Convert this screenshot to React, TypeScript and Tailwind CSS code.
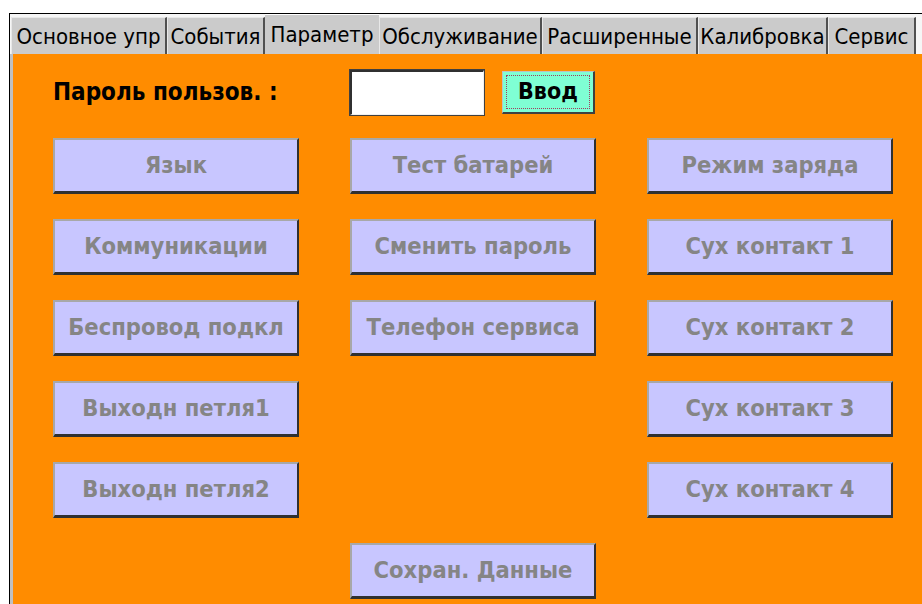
import React from 'react';

// Tab captions with their widths in the strip
const tabs: [string, number][] = [
  ['Основное упр', 156],
  ['События', 98],
  ['Параметр', 114],
  ['Обслуживание', 163],
  ['Расширенные', 156],
  ['Калибровка', 130],
  ['Сервис', 88],
];

// Three columns of settings buttons; null leaves the cell empty
const rows: (string | null)[][] = [
  ['Язык', 'Тест батарей', 'Режим заряда'],
  ['Коммуникации', 'Сменить пароль', 'Сух контакт 1'],
  ['Беспровод подкл', 'Телефон сервиса', 'Сух контакт 2'],
  ['Выходн петля1', null, 'Сух контакт 3'],
  ['Выходн петля2', null, 'Сух контакт 4'],
  [null, 'Сохран. Данные', null],
];

const font = { fontFamily: '"DejaVu Sans Condensed", "DejaVu Sans", sans-serif' };

function PanelButton({ label }: { label: string }) {
  return (
    <div className="h-[56px] w-[246px] bg-[#c8c6ff] border-t-2 border-l-2 border-t-[#a8a8a8] border-l-[#a8a8a8] border-b-[3px] border-r-2 border-b-[#303030] border-r-[#303030] flex items-center justify-center whitespace-nowrap text-[23.5px] font-bold text-[#858585]">
      {label}
    </div>
  );
}

export default function App() {
  return (
    <div className="w-[922px] h-[604px] bg-white pt-[13px] pl-[9px] overflow-hidden" style={font}>
      <div className="h-full border-t border-l border-black flex flex-col">
        {/* tab strip */}
        <div className="h-[40px] flex items-end bg-[#f6f6f6] pl-px">
          {tabs.map(([t, w]) => {
            const active = t === 'Параметр';
            return (
              <div
                key={t}
                style={{ width: w }}
                className={
                  active
                    ? 'h-[40px] shrink-0 whitespace-nowrap bg-[#cbcbcb] border-t border-t-white flex items-center justify-center text-[22px] text-black'
                    : 'h-[37px] shrink-0 whitespace-nowrap bg-[#cbcbcb] border-t border-l border-t-[#e8e8e8] border-l-[#e8e8e8] border-r-2 border-r-[#505050] flex items-center justify-center text-[22px] text-black'
                }
              >
                {t}
              </div>
            );
          })}
        </div>

        {/* orange settings page */}
        <div className="flex-1 bg-[#ff8c00] border-l-[3px] border-l-[#c0c0c0] pl-[40px] pt-[15px]">
          <div className="flex items-center h-[46px]">
            <div className="w-[297px] text-[24px] font-bold text-black">Пароль пользов. :</div>
            <div className="w-[134px] h-[45px] bg-white border-t-2 border-l-2 border-t-[#303030] border-l-[#303030] border-b border-r border-b-[#f0f0f0] border-r-[#f0f0f0] outline outline-1 outline-[#404040]" />
            <div className="ml-[18px] w-[93px] h-[43px] bg-[#7fffd4] border-t border-l border-t-[#c0c0c0] border-l-[#c0c0c0] border-b-2 border-r-2 border-b-[#404040] border-r-[#404040] p-[3px]">
              <div className="h-full w-full border border-dotted border-[#a04060] flex items-center justify-center text-[23px] font-bold text-black">
                Ввод
              </div>
            </div>
          </div>

          <div className="mt-[23px] grid grid-cols-[246px_246px_246px] gap-x-[51px] gap-y-[25px]">
            {rows.flat().map((label, i) =>
              label ? <PanelButton key={i} label={label} /> : <div key={i} className="h-[56px]" />
            )}
          </div>
        </div>
      </div>
    </div>
  );
}
